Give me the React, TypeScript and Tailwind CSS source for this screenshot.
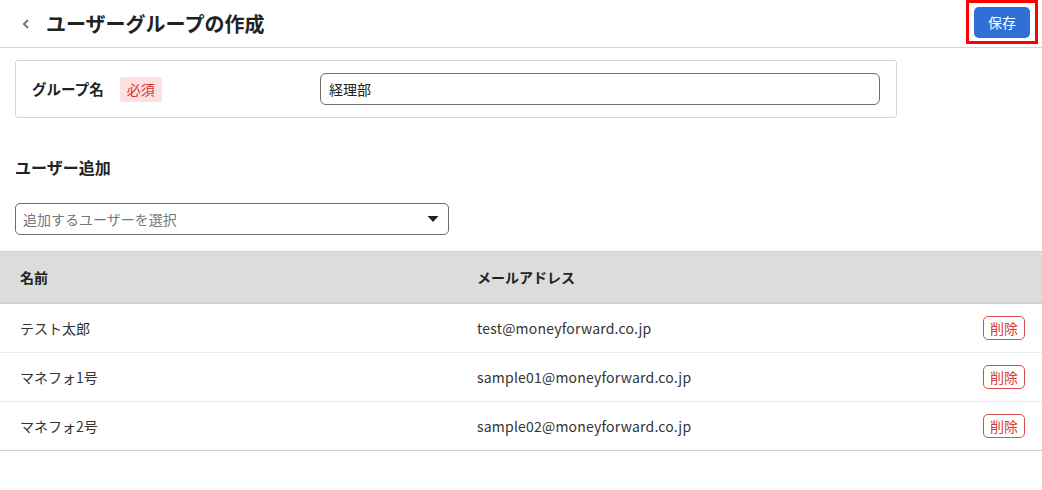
import React from "react";

type Member = {
  name: string;
  email: string;
};

const members: Member[] = [
  { name: "テスト太郎", email: "test@moneyforward.co.jp" },
  { name: "マネフォ1号", email: "sample01@moneyforward.co.jp" },
  { name: "マネフォ2号", email: "sample02@moneyforward.co.jp" },
];

const App = () => {
  return (
    <div className="min-h-[490px] w-full bg-white text-[#333] font-['Noto_Sans_CJK_JP','Noto_Sans',sans-serif] text-[14px]">
      {/* ヘッダー */}
      <div className="flex h-[48px] items-center justify-between border-b border-[#d6d6d6] pl-[20px] pr-[4px]">
        <div className="flex items-center gap-[14px]">
          <svg width="12" height="14" viewBox="0 0 12 14" className="text-[#777]">
            <path d="M8 3 L4 7 L8 11" fill="none" stroke="currentColor" strokeWidth="2" />
          </svg>
          <h1 className="text-[20px] font-bold text-[#222]">ユーザーグループの作成</h1>
        </div>
        <div className="flex h-[44px] w-[72px] items-center justify-center self-start border-[3px] border-[#ff0000]">
          <button className="h-[31px] w-[56px] rounded-[5px] bg-[#2f6fd6] text-[14px] text-white">保存</button>
        </div>
      </div>

      {/* グループ名 */}
      <div className="px-[15px] pt-[12px]">
        <div className="flex h-[58px] w-[882px] items-center rounded-[3px] border border-[#d4d4d4] pl-[16px] pr-[16px]">
          <div className="flex w-[288px] items-center gap-[16px]">
            <span className="text-[14.5px] font-bold text-[#222]">グループ名</span>
            <span className="rounded-[3px] bg-[#fde1e1] px-[7px] py-[2px] text-[14px] text-[#d93030]">必須</span>
          </div>
          <div className="flex h-[32px] flex-1 items-center rounded-[6px] border border-[#6e6e6e] px-[8px] text-[#222]">
            経理部
          </div>
        </div>
      </div>

      {/* ユーザー追加 */}
      <div className="px-[15px] pt-[37px]">
        <h2 className="text-[16px] font-bold text-[#222]">ユーザー追加</h2>
        <div className="mt-[24px] flex h-[32px] w-[434px] items-center justify-between rounded-[5px] border border-[#6e6e6e] pl-[7px] pr-[9px] text-[#777]">
          <span>追加するユーザーを選択</span>
          <svg width="12" height="8" viewBox="0 0 12 8">
            <path d="M0.5 1 L11.5 1 L6 7 Z" fill="#222" />
          </svg>
        </div>
      </div>

      {/* テーブル */}
      <div className="mt-[16px] border-t border-[#cfcfcf]">
        <div className="flex h-[52px] items-center border-b-[2px] border-[#cfcfcf] bg-[#dcdcdc] font-bold text-[#222]">
          <div className="w-[477px] pl-[20px]">名前</div>
          <div className="flex-1">メールアドレス</div>
        </div>
        {members.map((m, i) => (
          <div
            key={m.email}
            className={`flex h-[49px] items-center border-b ${i === members.length - 1 ? "border-[#cfcfcf]" : "border-[#ebebeb]"} text-[#333]`}
          >
            <div className="w-[477px] pl-[20px]">{m.name}</div>
            <div className="flex-1 tracking-[0.2px]">{m.email}</div>
            <button className="mr-[17px] h-[24px] w-[42px] rounded-[5px] border border-[#dd4b4b] text-[14px] text-[#d93a3a]">
              削除
            </button>
          </div>
        ))}
      </div>
    </div>
  );
};

export default App;
